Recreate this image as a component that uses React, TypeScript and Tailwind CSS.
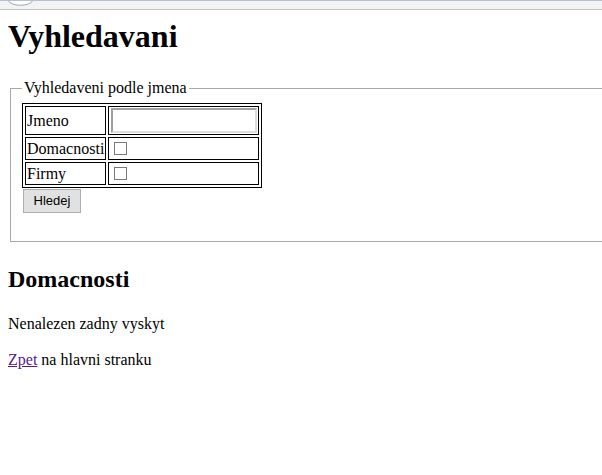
import React from 'react';

// Top edge of the browser frame that shows above the page
function FrameEdge() {
  return (
    <div className="relative h-[10px] border-t border-b border-t-[#b7bfcc] border-b-[#c3c3c3] bg-[#f3f3f3]">
      <svg width="40" height="8" viewBox="0 0 40 8" className="block">
        <path d="M8 -1 C10 6, 31 6, 33 -1 Z" fill="#ffffff" stroke="#9aa6b6" strokeWidth="1" />
      </svg>
    </div>
  );
}

function Checkbox() {
  return (
    <input
      type="checkbox"
      className="m-0 ml-[4px] block h-[13px] w-[13px] appearance-none border border-[#7a7a7a] bg-white"
    />
  );
}

export default function App() {
  return (
    <div className="min-h-screen overflow-hidden bg-white text-black font-['Liberation_Serif',serif]">
      <FrameEdge />

      <div className="px-[8px]">
        <h1 className="mt-[8px] text-[32px] font-bold leading-[37px]">Vyhledavani</h1>

        <fieldset className="mx-[2px] mt-[24px] w-[640px] border border-[#a9a9a9] pt-[6px] pb-[28px] pl-[11px]">
          <legend className="px-[2px] text-[16px] leading-[18px]">Vyhledaveni podle jmena</legend>

          <table className="border-separate border-spacing-[2px] border border-black text-[16px] leading-[18px]">
            <tbody>
              <tr>
                <td className="h-[27px] w-[81px] border border-black p-[1px] align-middle">Jmeno</td>
                <td className="h-[27px] w-[150px] border border-black p-[1px] align-middle">
                  <input
                    type="text"
                    className="ml-[1px] block h-[25px] w-[146px] border-2 border-t-[#a0a0a0] border-l-[#a0a0a0] border-r-[#dcdcdc] border-b-[#dcdcdc] bg-white outline-none"
                  />
                </td>
              </tr>
              <tr>
                <td className="h-[23px] border border-black p-[1px] align-middle">Domacnosti</td>
                <td className="h-[23px] border border-black p-[1px] align-middle">
                  <Checkbox />
                </td>
              </tr>
              <tr>
                <td className="h-[23px] border border-black p-[1px] align-middle">Firmy</td>
                <td className="h-[23px] border border-black p-[1px] align-middle">
                  <Checkbox />
                </td>
              </tr>
            </tbody>
          </table>

          <button
            type="button"
            className="ml-[1px] mt-[1px] block h-[24px] w-[58px] border border-[#adadad] bg-[#e1e1e1] text-[13px] font-['Liberation_Sans',sans-serif] text-black"
          >
            Hledej
          </button>
        </fieldset>

        <h2 className="mt-[23px] text-[24px] font-bold leading-[28px]">Domacnosti</h2>

        <p className="mt-[22px] text-[16px] leading-[18px]">Nenalezen zadny vyskyt</p>

        <p className="mt-[18px] text-[16px] leading-[18px]">
          <a href="#" className="text-[#551a8b] underline">Zpet</a> na hlavni stranku
        </p>
      </div>
    </div>
  );
}
